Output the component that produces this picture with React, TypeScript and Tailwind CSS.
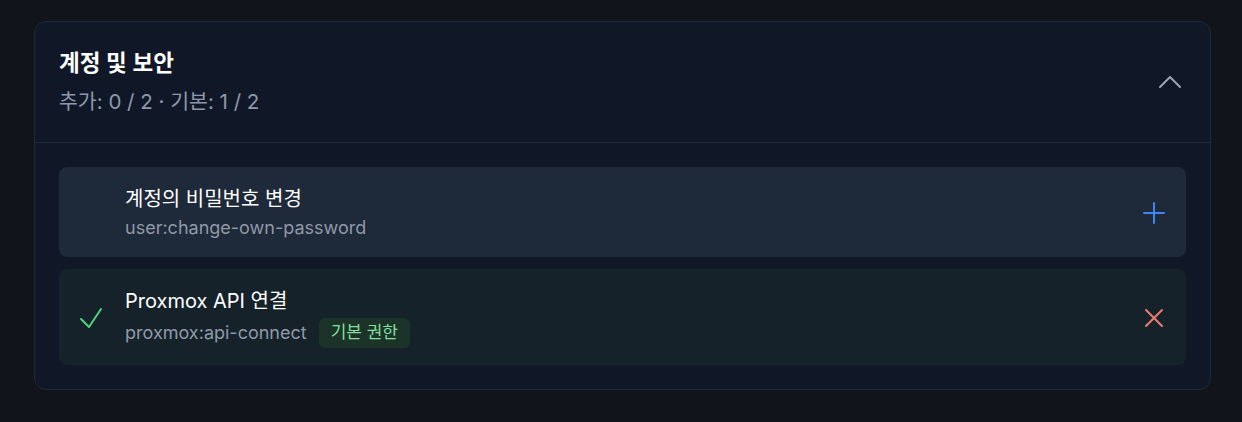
import {useState} from "react";

type Permission = {
    name: string;
    key: string;
    granted: boolean;
    isDefault: boolean;
};

const permissions: Permission[] = [
    {name: "계정의 비밀번호 변경", key: "user:change-own-password", granted: false, isDefault: false},
    {name: "Proxmox API 연결", key: "proxmox:api-connect", granted: true, isDefault: true},
];

function Icon({d, className}: {d: string; className: string}) {
    return (
        <svg viewBox="0 0 24 24" fill="none" stroke="currentColor" strokeWidth={1.5}
             strokeLinecap="round" strokeLinejoin="round" className={className}>
            <path d={d}/>
        </svg>
    );
}

function PermissionRow({perm}: {perm: Permission}) {
    return (
        <div className={"flex items-center justify-between rounded-lg px-4 pt-[17px] pb-4 " +
            (perm.granted ? "bg-[#15222a]" : "bg-[#1e2939]")}>
            <div className="flex items-center gap-[18px]">
                <div className="w-8 h-8 shrink-0">
                    {perm.granted && (
                        <Icon d="m4.5 12.75 6 6 9-13.5" className="w-8 h-8 text-[#4fd27d]"/>
                    )}
                </div>
                <div className="flex flex-col">
                    <h3 className="text-[20px] leading-[31px] font-normal text-white">{perm.name}</h3>
                    <div className="flex items-center gap-3 min-h-[26px]">
                        <span className="text-[18px] leading-[26px] text-[#8f99a8]">{perm.key}</span>
                        {perm.isDefault && (
                            <span className="h-[30px] my-px px-3 flex items-center rounded-md bg-[#1b3328] text-[17px] text-[#86df9f]">
                                기본 권한
                            </span>
                        )}
                    </div>
                </div>
            </div>
            {perm.granted ? (
                <Icon d="M6 18 18 6M6 6l12 12" className="w-8 h-8 text-[#ee7b71]"/>
            ) : (
                <Icon d="M12 4.5v15m7.5-7.5h-15" className="w-8 h-8 text-[#3f86f5]"/>
            )}
        </div>
    );
}

export default function App() {
    const [open, setOpen] = useState(true);

    return (
        <div className="min-h-screen bg-[#12141b] pl-[34px] pr-[31px] pt-[21px]"
             style={{fontFamily: "Inter, 'Noto Sans CJK KR', sans-serif"}}>
            <div className="rounded-xl border border-[#1e2939] bg-[#101828]">
                <div className="flex items-center justify-between px-6 py-[26px] cursor-pointer"
                     onClick={() => setOpen(!open)}>
                    <div className="flex flex-col">
                        <h2 className="text-[22.5px] leading-[30px] font-semibold text-white">계정 및 보안</h2>
                        <p className="mt-[10px] text-[20.5px] leading-7 text-[#8f99a8]">추가: 0 / 2 · 기본: 1 / 2</p>
                    </div>
                    <Icon d="m4.5 15.75 7.5-7.5 7.5 7.5" className="w-8 h-8 text-[#9ca3af]"/>
                </div>
                {open && (
                    <div className="border-t border-[#1e2939] p-6 flex flex-col gap-3">
                        {permissions.map(p => <PermissionRow key={p.key} perm={p}/>)}
                    </div>
                )}
            </div>
        </div>
    );
}
